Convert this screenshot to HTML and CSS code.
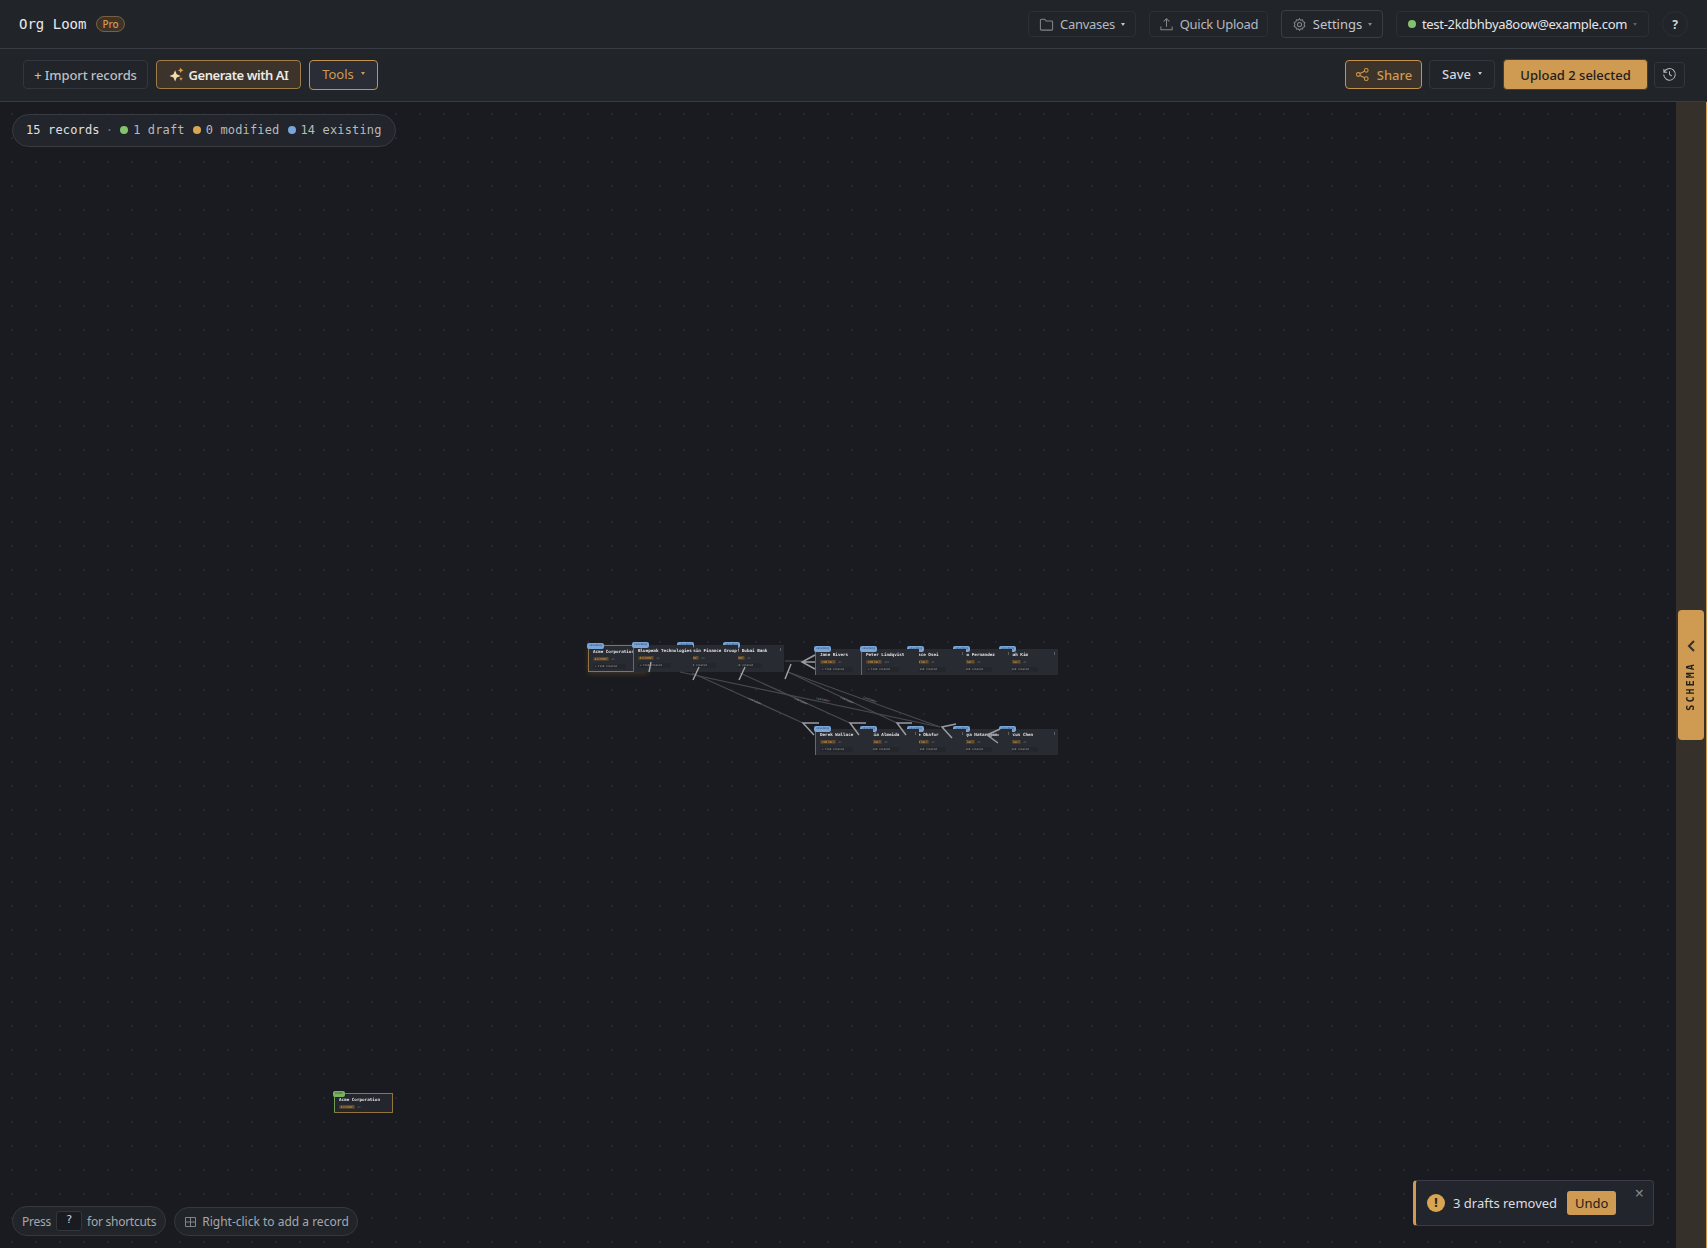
FILE: index.html
```html
<!DOCTYPE html>
<html lang="en">
<head>
    <meta charset="UTF-8">
    <meta name="viewport" content="width=device-width, initial-scale=1.0">
    <title>Org Loom</title>
    <link rel="stylesheet" href="styles.css">
</head>
<body>
    <div class="app">
        <header class="topbar">
            <div class="brand">Org Loom</div>
            <span class="pro-badge">Pro</span>
            <div class="topbar-right">
                <button class="btn btn-quiet">
                    <svg class="icon" viewBox="0 0 16 16"><path d="M1.5 13V3.5a1 1 0 0 1 1-1h3.6l1.6 1.8h5.8a1 1 0 0 1 1 1V13a1 1 0 0 1-1 1h-11a1 1 0 0 1-1-1z"/></svg>
                    Canvases <i class="caret"></i>
                </button>
                <button class="btn btn-quiet">
                    <svg class="icon" viewBox="0 0 16 16"><path d="M8 10.5V2M5 4.8 8 1.8l3 3M2 10v3.5h12V10"/></svg>
                    Quick Upload
                </button>
                <button class="btn btn-settings">
                    <svg class="icon" viewBox="0 0 16 16"><circle cx="8" cy="8" r="2.2"/><path d="M8 1.8l1.2 1.7 2-.5.6 2 1.9.9-.8 2.1.8 2.1-1.9.9-.6 2-2-.5L8 14.2l-1.2-1.7-2 .5-.6-2-1.9-.9.8-2.1-.8-2.1 1.9-.9.6-2 2 .5z"/></svg>
                    Settings <i class="caret caret-dim"></i>
                </button>
                <button class="btn btn-quiet btn-user">
                    <span class="dot dot-green"></span>
                    test-2kdbhbya8oow@example.com <i class="caret caret-dark"></i>
                </button>
                <button class="btn-help">?</button>
            </div>
        </header>

        <div class="toolbar">
            <button class="btn btn-import">+ Import records</button>
            <button class="btn btn-generate">
                <svg class="sparkle" viewBox="0 0 16 16">
                    <path class="sparkle-big" d="M6.5 3.5l1.7 4.3 4.3 1.7-4.3 1.7-1.7 4.3-1.7-4.3L.5 9.5l4.3-1.7z"/>
                    <path class="sparkle-small" d="M12.5 .5l.9 2.1 2.1.9-2.1.9-.9 2.1-.9-2.1-2.1-.9 2.1-.9z"/>
                    <path class="sparkle-small" d="M12.8 10.5l.6 1.5 1.5.6-1.5.6-.6 1.5-.6-1.5-1.5-.6 1.5-.6z"/>
                </svg>
                Generate with AI
            </button>
            <button class="btn btn-tools">Tools <i class="caret caret-orange"></i></button>
            <div class="toolbar-right">
                <button class="btn btn-share">
                    <svg class="icon icon-orange" viewBox="0 0 16 16"><circle cx="3.5" cy="8" r="2"/><circle cx="12" cy="3.5" r="2"/><circle cx="12" cy="12.5" r="2"/><path d="M5.3 7 10.2 4.5M5.3 9l4.9 2.5"/></svg>
                    Share
                </button>
                <button class="btn btn-save">Save <i class="caret"></i></button>
                <button class="btn btn-upload">Upload 2 selected</button>
                <button class="btn btn-history">
                    <svg class="icon icon-light" viewBox="0 0 16 16"><path d="M2.2 5.6A6.2 6.2 0 1 1 1.8 8M2 2.2v3.5h3.5M8 4.6V8l2.4 1.6"/></svg>
                </button>
            </div>
        </div>

        <div class="workspace">
            <main class="canvas">
                <!-- row 1 -->
                <div class="node row-a col-a4 wide">
                    <span class="status status-existing">existing</span><span class="node-menu"></span>
                    <div class="node-title">Gulf Dubai Bank</div>
                    <div class="node-meta"><span class="node-tag">ACCOUNT</span><span class="node-count">#1</span></div>
                    <div class="node-foot">+ Find related</div>
                </div>
                <div class="node row-a col-a3 wide">
                    <span class="status status-existing">existing</span>
                    <div class="node-title">Boussin Finance Group</div>
                    <div class="node-meta"><span class="node-tag">ACCOUNT</span><span class="node-count">#3</span></div>
                    <div class="node-foot">+ Find related</div>
                </div>
                <div class="node row-a col-a1 wide node-selected">
                    <span class="status status-existing">existing</span>
                    <div class="node-title">Acme Corporation</div>
                    <div class="node-meta"><span class="node-tag">ACCOUNT</span><span class="node-count">#3</span></div>
                    <div class="node-foot">+ Find related</div>
                </div>
                <div class="node row-a col-a2 wide">
                    <span class="status status-existing">existing</span>
                    <div class="node-title">Bluepeak Technologies</div>
                    <div class="node-meta"><span class="node-tag">ACCOUNT</span><span class="node-count">#3</span></div>
                    <div class="node-foot">+ Find related</div>
                </div>

                <!-- row 2 -->
                <div class="node row-b col-b5">
                    <span class="status status-existing">existing</span><span class="node-menu"></span>
                    <div class="node-title">Jonah Kim</div>
                    <div class="node-meta"><span class="node-tag">CONTACT</span><span class="node-count">#7</span></div>
                    <div class="node-foot">+ Find related</div>
                </div>
                <div class="node row-b col-b4">
                    <span class="status status-existing">existing</span><span class="node-menu"></span>
                    <div class="node-title">Theo Fernandez</div>
                    <div class="node-meta"><span class="node-tag">CONTACT</span><span class="node-count">#3</span></div>
                    <div class="node-foot">+ Find related</div>
                </div>
                <div class="node row-b col-b3">
                    <span class="status status-existing">existing</span><span class="node-menu"></span>
                    <div class="node-title">Grace Osei</div>
                    <div class="node-meta"><span class="node-tag">CONTACT</span><span class="node-count">#5</span></div>
                    <div class="node-foot">+ Find related</div>
                </div>
                <div class="node row-b col-b1">
                    <span class="status status-existing">existing</span>
                    <div class="node-title">Jane Rivers</div>
                    <div class="node-meta"><span class="node-tag">CONTACT</span><span class="node-count">#3</span></div>
                    <div class="node-foot">+ Find related</div>
                </div>
                <div class="node row-b col-b2">
                    <span class="status status-existing">existing</span>
                    <div class="node-title">Peter Lindqvist</div>
                    <div class="node-meta"><span class="node-tag">CONTACT</span><span class="node-count">#10</span></div>
                    <div class="node-foot">+ Find related</div>
                </div>

                <!-- row 3 -->
                <div class="node row-c col-b5">
                    <span class="status status-existing">existing</span><span class="node-menu"></span>
                    <div class="node-title">Marcus Chen</div>
                    <div class="node-meta"><span class="node-tag">CONTACT</span><span class="node-count">#5</span></div>
                    <div class="node-foot">+ Find related</div>
                </div>
                <div class="node row-c col-b4">
                    <span class="status status-existing">existing</span><span class="node-menu"></span>
                    <div class="node-title">Anaya Natarajan</div>
                    <div class="node-meta"><span class="node-tag">CONTACT</span><span class="node-count">#3</span></div>
                    <div class="node-foot">+ Find related</div>
                </div>
                <div class="node row-c col-b3">
                    <span class="status status-existing">existing</span><span class="node-menu"></span>
                    <div class="node-title">Ike Okafor</div>
                    <div class="node-meta"><span class="node-tag">CONTACT</span><span class="node-count">#3</span></div>
                    <div class="node-foot">+ Find related</div>
                </div>
                <div class="node row-c col-b2">
                    <span class="status status-existing">existing</span><span class="node-menu"></span>
                    <div class="node-title">Lucia Almeida</div>
                    <div class="node-meta"><span class="node-tag">CONTACT</span><span class="node-count">#5</span></div>
                    <div class="node-foot">+ Find related</div>
                </div>
                <div class="node row-c col-b1">
                    <span class="status status-existing">existing</span>
                    <div class="node-title">Derek Wallace</div>
                    <div class="node-meta"><span class="node-tag">CONTACT</span><span class="node-count">#3</span></div>
                    <div class="node-foot">+ Find related</div>
                </div>

                <!-- the new draft, down on its own -->
                <div class="node node-draft">
                    <span class="status status-draft">draft</span>
                    <div class="node-title">Acme Corporation</div>
                    <div class="node-meta"><span class="node-tag">ACCOUNT</span><span class="node-count">#3</span></div>
                </div>

                <!-- edges use page coordinates, hence the viewBox offset -->
                <svg class="edges" viewBox="0 102 1676 1146">
                    <g class="edge-line">
                        <path d="M692 673 803 723"/>
                        <path d="M680 672 940 727"/>
                        <path d="M740 673 850 723"/>
                        <path d="M788 672 897 723"/>
                        <path d="M788 672 940 727"/>
                        <path d="M785 661H802"/>
                    </g>
                    <g class="edge-stub">
                        <path d="M651 662 649 672"/>
                        <path d="M699 667 693 680"/>
                        <path d="M745 667 739 680"/>
                        <path d="M791 664 785 679"/>
                    </g>
                    <g class="edge-arrow">
                        <path d="M815 655 802 662 815 669M802 662H815"/>
                        <path d="M819 723H803L814 735"/>
                        <path d="M866 723H850L859 735"/>
                        <path d="M912 723H897L906 735"/>
                        <path d="M956 724 942 727 952 738"/>
                        <path d="M1000 729 987 735 998 743M987 735H999"/>
                    </g>
                    <g class="edge-label">
                        <text transform="translate(748 699) rotate(24)">customer</text>
                        <text transform="translate(794 699) rotate(24)">customer</text>
                        <text transform="translate(816 699) rotate(12)">customer</text>
                        <text transform="translate(840 698) rotate(24)">customer</text>
                        <text transform="translate(863 698) rotate(20)">customer</text>
                    </g>
                </svg>

                <div class="stats-pill">
                    <b>15 records</b>
                    <span class="stats-sep">·</span>
                    <span class="stat"><span class="dot dot-green"></span>1 draft</span>
                    <span class="stat"><span class="dot dot-orange"></span>0 modified</span>
                    <span class="stat"><span class="dot dot-blue"></span>14 existing</span>
                </div>

                <div class="hints">
                    <div class="hint hint-press">Press <kbd>?</kbd> for shortcuts</div>
                    <div class="hint hint-grid">
                        <svg class="grid-icon" viewBox="2 2.5 12 11"><path d="M2.5 3h11v10h-11zM2.5 8h11M8 3v10"/></svg>
                        Right-click to add a record
                    </div>
                </div>

                <div class="toast">
                    <span class="toast-icon">!</span>
                    <span class="toast-text">3 drafts removed</span>
                    <button class="toast-undo">Undo</button>
                    <span class="toast-close">×</span>
                </div>
            </main>

            <aside class="schema-rail">
                <button class="schema-tab">
                    <svg class="schema-chevron" viewBox="0 0 10 14"><path d="M8 2 3 7l5 5"/></svg>
                    <span class="schema-label">SCHEMA</span>
                </button>
            </aside>
        </div>
    </div>
</body>
</html>
```

FILE: styles.css
```css
* {
    box-sizing: border-box;
}
body {
    margin: 0;
    font-family: "Noto Sans", sans-serif;
    font-size: 13px;
    color: #c9ccd2;
    background: #1a1b20;
    overflow: hidden;
}
button {
    font: inherit;
    color: inherit;
    background: none;
    cursor: pointer;
}
.app {
    display: flex;
    flex-direction: column;
    height: 100vh;
}

/* Top bar */
.topbar {
    display: flex;
    align-items: center;
    flex: none;
    height: 49px;
    padding: 0 19px;
    background: #212429;
    border-bottom: 1px solid #393c45;
}
.brand {
    font-family: "DejaVu Sans Mono", monospace;
    font-size: 14px;
    color: #e8e9ec;
}
.pro-badge {
    margin-left: 10px;
    padding: 0 5px;
    height: 16px;
    line-height: 14px;
    font-size: 10px;
    font-weight: 500;
    color: #d09a50;
    background: #3d3328;
    border: 1px solid #7a6040;
    border-radius: 8px;
}
.topbar-right {
    display: flex;
    align-items: center;
    gap: 13px;
    margin-left: auto;
}
.topbar-right .btn {
    gap: 6px;
    letter-spacing: -0.3px;
}
.topbar-right .btn-settings {
    letter-spacing: 0;
}

/* Buttons */
.btn {
    display: flex;
    align-items: center;
    justify-content: center;
    gap: 7px;
    padding: 0;
    white-space: nowrap;
    border: 1px solid #33363d;
    border-radius: 4px;
}
.btn-quiet {
    height: 26px;
    border-color: #2c2f36;
    color: #b5b8be;
}
.btn-quiet:nth-child(1) {
    width: 108px;
}
.btn-quiet:nth-child(2) {
    width: 119px;
}
.btn-settings {
    width: 102px;
    height: 28px;
    color: #c3c6cc;
    border-color: #3a3d45;
}
.btn-user {
    width: 253px;
    color: #e4e5e8;
}
.btn-help {
    width: 26px;
    height: 26px;
    padding: 0;
    font-weight: 700;
    font-size: 12px;
    color: #d2d4d8;
    border: 1px solid #2c2f36;
    border-radius: 50%;
}
.icon {
    width: 15px;
    height: 15px;
    flex: none;
    fill: none;
    stroke: #83868c;
    stroke-width: 1.1;
}
.icon-orange {
    stroke: #d09a50;
}
.icon-light {
    stroke: #b5b8be;
}
.caret {
    width: 0;
    height: 0;
    border-left: 2.5px solid transparent;
    border-right: 2.5px solid transparent;
    border-top: 3px solid #c3c6cc;
}
.caret-dim {
    border-top-color: #85888e;
}
.caret-dark {
    border-top-color: #5b5e65;
}
.caret-orange {
    border-top-color: #d09a50;
}
.dot {
    display: inline-block;
    flex: none;
    width: 8px;
    height: 8px;
    border-radius: 50%;
}
.dot-green {
    background: #85c26e;
}
.dot-orange {
    background: #d9a553;
}
.dot-blue {
    background: #7aa5d8;
}

/* Toolbar */
.toolbar {
    display: flex;
    align-items: center;
    flex: none;
    gap: 8px;
    height: 53px;
    padding: 0 22px 1px 23px;
    background: #212429;
    border-bottom: 1px solid #393c45;
}
.toolbar-right {
    display: flex;
    align-items: center;
    gap: 7px;
    margin-left: auto;
}
.btn-import {
    width: 125px;
    height: 29px;
    font-weight: 500;
    letter-spacing: -0.1px;
    color: #bcbfc5;
}
.btn-generate {
    width: 145px;
    height: 29px;
    gap: 5px;
    font-weight: 600;
    letter-spacing: -0.45px;
    color: #ece9e2;
    background: #3c332a;
    border-color: #a07c48;
}
.sparkle {
    width: 15px;
    height: 15px;
    flex: none;
}
.sparkle-big {
    fill: #f3dcae;
}
.sparkle-small {
    fill: #e0a24e;
}
.btn-tools {
    width: 69px;
    height: 30px;
    padding-bottom: 2px;
    color: #d09a50;
    background: #2a2d35;
    border-color: #c4924e;
}
.btn-share {
    width: 77px;
    height: 29px;
    color: #d09a50;
    font-weight: 500;
    background: #3c332a;
    border-color: #c4924e;
}
.btn-save {
    width: 66px;
    height: 29px;
    padding-bottom: 2px;
    font-weight: 500;
    color: #d5d7db;
}
.btn-upload {
    width: 145px;
    height: 31px;
    margin-left: 1px;
    font-weight: 500;
    color: #1f1d1a;
    background: #cf9a52;
    border-color: #4a3c2a;
}
.btn-history {
    width: 31px;
    height: 26px;
    margin-left: -1px;
}

/* Canvas */
.workspace {
    display: flex;
    flex: 1;
    min-height: 0;
}
.canvas {
    position: relative;
    flex: 1;
    overflow: hidden;
    background-color: #1a1b20;
    background-image: radial-gradient(circle, #25272c 1px, transparent 1.2px);
    background-size: 24px 24px;
}
.schema-rail {
    display: flex;
    align-items: flex-start;
    justify-content: center;
    flex: none;
    width: 31px;
    padding: 508px 1px 0 0;
    background: #35302a;
    border-right: 1px solid #cf9a52;
}
.schema-tab {
    display: flex;
    flex-direction: column;
    align-items: center;
    width: 26px;
    height: 130px;
    padding: 29px 0 0;
    color: #22201c;
    background: #cf9a52;
    border: none;
    border-radius: 4px;
}
.schema-chevron {
    width: 10px;
    height: 14px;
    fill: none;
    stroke: #33302b;
    stroke-width: 2;
}
.schema-label {
    margin-top: 9px;
    font-family: "DejaVu Sans Mono", monospace;
    font-weight: 700;
    font-size: 10px;
    letter-spacing: 2.1px;
    writing-mode: vertical-rl;
    transform: rotate(180deg);
}

/* Record nodes, drawn very small because the canvas is zoomed out */
.node {
    position: absolute;
    width: 58px;
    height: 26px;
    padding: 3px 4px;
    background: #282b32;
    border-left: 1px solid #4f6d94;
    font-family: "DejaVu Sans Mono", monospace;
    filter: blur(0.25px);
}
.wide {
    width: 60px;
    height: 27px;
}
.row-a {
    top: 543px;
}
.row-b {
    top: 547px;
}
.row-c {
    top: 627px;
}
.col-a1 {
    left: 588px;
}
.col-a2 {
    left: 633px;
}
.col-a3 {
    left: 678px;
}
.col-a4 {
    left: 724px;
}
.col-b1 {
    left: 815px;
}
.col-b2 {
    left: 861px;
}
.col-b3 {
    left: 908px;
}
.col-b4 {
    left: 954px;
}
.col-b5 {
    left: 1000px;
}
.node-selected {
    border: 1px solid #94733f;
    border-right: none;
    box-shadow: 0 2px 5px rgba(207, 154, 82, 0.2);
}
.node-draft {
    left: 334px;
    top: 991px;
    width: 59px;
    height: 20px;
    background: #23262c;
    border: 1px solid #94733f;
    border-left-color: #6f9e55;
    border-radius: 1px;
}
.status {
    position: absolute;
    top: -3px;
    left: -2px;
    width: 17px;
    height: 6px;
    font-size: 2.6px;
    line-height: 6px;
    text-align: center;
    color: #24364d;
    background: #7aa5d8;
    border-radius: 2px;
}
.status-draft {
    width: 12px;
    color: #22331a;
    background: #7ab360;
}
.node-menu {
    position: absolute;
    top: 3px;
    right: 3px;
    width: 1px;
    height: 3px;
    background: #5c5f66;
}
.node-title {
    height: 6px;
    font-size: 4.25px;
    line-height: 6px;
    font-weight: 700;
    white-space: nowrap;
    color: #e3e4e6;
}
.node-meta {
    display: flex;
    align-items: center;
    gap: 2px;
    margin-top: 2px;
}
.node-tag {
    padding: 0 1.5px;
    height: 4px;
    font-size: 3.2px;
    line-height: 4px;
    font-weight: 700;
    color: #c08e4a;
    background: #4a3c2a;
    border-radius: 1px;
}
.node-count {
    font-size: 2.6px;
    color: #6d7077;
}
.node-foot {
    width: 33px;
    height: 5px;
    margin-top: 2.5px;
    padding-left: 2px;
    font-size: 2.6px;
    line-height: 5px;
    white-space: nowrap;
    color: #a5a8ad;
    background: #23262b;
    border-radius: 3px;
}

/* Edges */
.edges {
    position: absolute;
    top: 0;
    left: 0;
    width: 1676px;
    height: 1146px;
    pointer-events: none;
}
.edge-line path {
    fill: none;
    stroke: #47494f;
    stroke-width: 1.2;
}
.edge-stub path {
    fill: none;
    stroke: #a4a6ab;
    stroke-width: 1.4;
}
.edge-arrow path {
    fill: none;
    stroke: #9a9ca1;
    stroke-width: 1.5;
}
.edge-label text {
    font-family: "DejaVu Sans Mono", monospace;
    font-size: 3px;
    fill: #9a9ca1;
}

/* Floating bits on the canvas */
.stats-pill {
    position: absolute;
    top: 12px;
    left: 12px;
    display: flex;
    align-items: center;
    gap: 8px;
    width: 384px;
    height: 33px;
    padding: 0 13px 1px;
    font-family: "DejaVu Sans Mono", monospace;
    font-size: 12px;
    letter-spacing: 0.15px;
    white-space: nowrap;
    color: #b8b9bb;
    background: #22252b;
    border: 1px solid #383b42;
    border-radius: 17px;
}
.stats-pill b {
    font-weight: 400;
    color: #e0e1e3;
}
.stats-sep {
    margin: 0 -1px 0 -2px;
    color: #6d7077;
}
.stat {
    display: flex;
    align-items: center;
    gap: 5px;
}
.hints {
    position: absolute;
    left: 12px;
    bottom: 12px;
    display: flex;
    align-items: flex-end;
    gap: 8px;
}
.hint {
    display: flex;
    align-items: center;
    gap: 5px;
    height: 30px;
    padding: 0 9px;
    font-size: 12px;
    white-space: nowrap;
    color: #a5a8ae;
    background: #212429;
    border: 1px solid #35383f;
    border-radius: 15px;
}
.hint-press {
    letter-spacing: -0.25px;
}
.hint-grid {
    height: 29px;
    gap: 6px;
    padding: 0 8px 0 10px;
}
.grid-icon {
    width: 11px;
    height: 10px;
    flex: none;
    fill: none;
    stroke: #83868c;
    stroke-width: 1.1;
}
.hint kbd {
    width: 26px;
    height: 20px;
    font-family: "DejaVu Sans Mono", monospace;
    font-size: 11px;
    line-height: 16px;
    text-align: center;
    color: #d2d4d8;
    background: #1a1b20;
    border: 1px solid #33363d;
    border-radius: 3px;
}
.toast {
    position: absolute;
    right: 22px;
    bottom: 22px;
    display: flex;
    align-items: center;
    width: 241px;
    height: 46px;
    padding-left: 11px;
    background: #22252b;
    border: 1px solid #3a3d45;
    border-left: 3px solid #cf9a52;
    border-radius: 4px;
}
.toast-icon {
    flex: none;
    width: 18px;
    height: 18px;
    font-weight: 800;
    font-size: 12px;
    line-height: 18px;
    text-align: center;
    color: #2a241c;
    background: #d9a553;
    border-radius: 50%;
}
.toast-text {
    margin-left: 8px;
    font-size: 13px;
    white-space: nowrap;
    color: #dcdde0;
}
.toast-undo {
    width: 49px;
    height: 24px;
    margin-left: 10px;
    padding: 0;
    font-size: 13px;
    color: #211e19;
    background: #cf9a52;
    border: none;
    border-radius: 3px;
}
.toast-close {
    position: absolute;
    top: 3px;
    right: 9px;
    font-size: 16px;
    line-height: 18px;
    color: #85888e;
}
```
